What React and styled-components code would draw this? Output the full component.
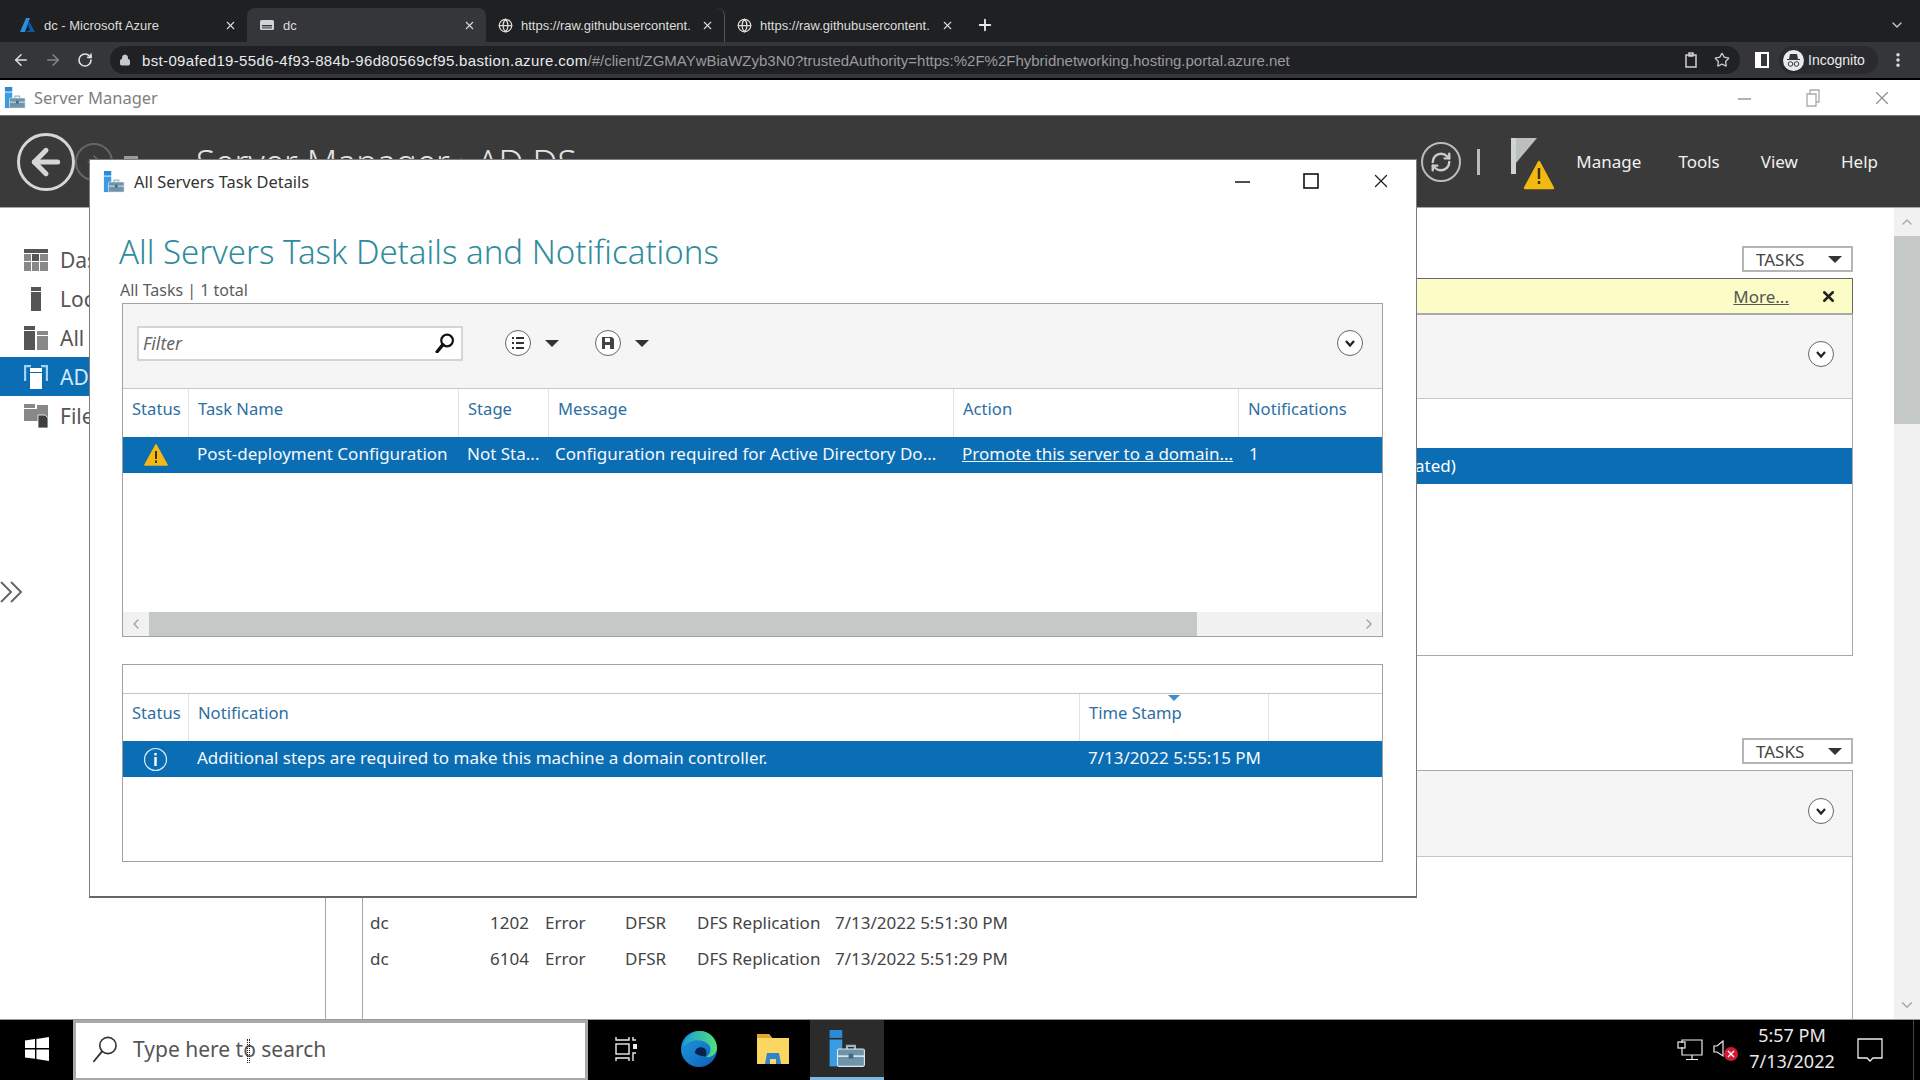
import React from "react"
import styled, { createGlobalStyle } from "styled-components"
import { ArrowLeft, ArrowRight, RotateCw, RefreshCw, Lock, Star, Plus, X, ChevronDown, ChevronUp, ChevronLeft, ChevronRight, Globe, MoreVertical } from "lucide-react"

const GlobalStyle = createGlobalStyle`
  html, body { margin: 0; padding: 0; background: #fff; }
  * { box-sizing: border-box; }
  body { font-family: "Noto Sans", "Open Sans", sans-serif; }
`

const Page = styled.div`
  position: relative;
  width: 1920px;
  height: 1080px;
  display: flex;
  flex-direction: column;
  overflow: hidden;
`

// Chrome
const TabBar = styled.div`
  height: 42px;
  background: #1f2021;
  display: flex;
  align-items: flex-end;
  padding-left: 8px;
  font-family: "Liberation Sans", Arial, sans-serif;
  font-size: 13px;
`
const Tab = styled.div`
  width: 239px;
  height: 34px;
  padding: 0 10px 0 12px;
  display: flex;
  align-items: center;
  gap: 8px;
  color: #dcdcdc;
  border-radius: 8px 8px 0 0;
  background: ${p => (p.$active ? "#35363a" : "transparent")};
  border-right: ${p => (p.$divider ? "1px solid #55565a" : "none")};
`
const TabTitle = styled.span`
  flex: 1;
  white-space: nowrap;
  overflow: hidden;
`
const NewTab = styled.div`
  margin-left: 12px;
  height: 34px;
  display: flex;
  align-items: center;
  color: #e8e8e8;
`
const TabMenu = styled.div`
  margin-left: auto;
  height: 34px;
  padding-right: 15px;
  display: flex;
  align-items: center;
  color: #c8c8c8;
`
const BrowserBar = styled.div`
  height: 38px;
  background: #35363a;
  border-bottom: 2px solid #000;
  display: flex;
  align-items: center;
  padding-left: 5px;
  font-family: "Liberation Sans", Arial, sans-serif;
`
const NavButton = styled.div`
  width: 32px;
  margin-left: ${p => p.$gap || 0}px;
  display: flex;
  justify-content: center;
  color: ${p => (p.$dim ? "#85868a" : "#dfe1e5")};
`
const Omnibox = styled.div`
  margin-left: 9px;
  width: 1630px;
  height: 28px;
  border-radius: 14px;
  background: #202124;
  padding: 0 10px 0 9px;
  display: flex;
  align-items: center;
  gap: 11px;
  color: #c8c8c8;
  font-size: 15px;
  white-space: nowrap;
`
const UrlHost = styled.span`
  color: #e8eaed;
  letter-spacing: 0.35px;
`
const UrlRest = styled.span`
  color: #9a9b9e;
`
const OmniActions = styled.div`
  margin-left: auto;
  display: flex;
  align-items: center;
  gap: 16px;
`
const ProfilePill = styled.div`
  margin-left: 1px;
  height: 28px;
  width: 99px;
  border-radius: 14px;
  background: #2a2b2e;
  display: flex;
  align-items: center;
  gap: 4px;
  padding-left: 4px;
  color: #e8eaed;
  font-size: 14px;
`
const Avatar = styled.div`
  width: 21px;
  height: 21px;
  border-radius: 50%;
  background: #e8eaed;
  display: flex;
  align-items: center;
  justify-content: center;
`

// Server Manager window
const AppTitleBar = styled.div`
  height: 35px;
  background: #fff;
  display: flex;
  align-items: center;
  padding-left: 4px;
  gap: 8px;
  color: #808080;
  font-size: 16.5px;
`
const WindowControls = styled.div`
  margin-left: auto;
  display: flex;
  align-items: center;
  color: ${p => (p.$dark ? "#222" : "#8c8c8c")};
  padding: ${p => (p.$dark ? "0 24px 2px 0" : "0 27px 0 0")};
  gap: ${p => (p.$dark ? "50px" : "48px")};
`
const AppHeader = styled.div`
  height: 93px;
  background: #3a3a3a;
  border-top: 1px solid #777;
  border-bottom: 1px solid #a8a8a8;
  display: flex;
  align-items: center;
  padding: 0 42px 0 17px;
  color: #eee;
`
const BackCircle = styled.div`
  width: 58px;
  height: 58px;
  border-radius: 50%;
  border: 3px solid #d6d6d6;
  color: #d6d6d6;
  display: flex;
  align-items: center;
  justify-content: center;
`
const ForwardCircle = styled.div`
  width: 38px;
  height: 38px;
  border-radius: 50%;
  border: 2px solid #666;
  color: #666;
  display: flex;
  align-items: center;
  justify-content: center;
`
const HistoryDash = styled.div`
  width: 14px;
  height: 3px;
  margin: 0 0 8px 11px;
  background: #9a9a9a;
`
const HeaderTitle = styled.div`
  margin-left: 58px;
  font-size: 35px;
  font-weight: 300;
  color: #e4e4e4;
  white-space: nowrap;
`
const HeaderRight = styled.div`
  margin-left: auto;
  display: flex;
  align-items: center;
`
const RefreshCircle = styled.div`
  width: 40px;
  height: 40px;
  border-radius: 50%;
  border: 2px solid #bbb;
  color: #ccc;
  display: flex;
  align-items: center;
  justify-content: center;
`
const Divider = styled.div`
  width: 3px;
  height: 26px;
  background: #bbb;
  margin: 0 31px 0 16px;
`
const FlagWrap = styled.div`
  width: 46px;
  height: 52px;
  margin: 5px 19px 0 0;
`
const MenuItem = styled.div`
  font-size: 17px;
  color: #f0f0f0;
  margin-left: ${p => p.$gap || 0}px;
`
const Body = styled.div`
  flex: 1;
  display: flex;
  min-height: 0;
`
const Sidebar = styled.div`
  width: 326px;
  padding-top: 32px;
  border-right: 1px solid #a6a6a6;
  display: flex;
  flex-direction: column;
  flex-shrink: 0;
`
const NavItem = styled.div`
  height: 39px;
  padding-left: 24px;
  display: flex;
  align-items: center;
  gap: 12px;
  font-size: 21px;
  white-space: nowrap;
  color: ${p => (p.$active ? "#cfe8fb" : "#555")};
  background: ${p => (p.$active ? "#0b6db3" : "transparent")};
`
const Collapse = styled.div`
  margin-top: 144px;
  color: #666;
  display: flex;
  align-items: center;
`
const ThumbColumn = styled.div`
  width: 37px;
  flex-shrink: 0;
  border-right: 1px solid #a6a6a6;
`
const Content = styled.div`
  flex: 1;
  min-width: 0;
  padding: 38px 41px 0 0;
  overflow: hidden;
  display: flex;
  flex-direction: column;
`
const TasksRow = styled.div`
  display: flex;
  justify-content: flex-end;
  flex-shrink: 0;
`
const TasksButton = styled.div`
  width: 111px;
  height: 26px;
  border: 2px solid #b5b5b5;
  background: #fff;
  display: flex;
  align-items: center;
  justify-content: space-between;
  padding: 0 9px 0 12px;
  font-size: 17px;
  color: #444;
`
const Caret = styled.span`
  width: 0;
  height: 0;
  border-left: ${p => p.$size || 7}px solid transparent;
  border-right: ${p => p.$size || 7}px solid transparent;
  border-top: ${p => p.$size || 7}px solid #333;
`
const Banner = styled.div`
  margin-top: 6px;
  height: 36px;
  flex-shrink: 0;
  background: #fbfcc6;
  border: 1px solid #666;
  border-bottom-color: #aaa;
  display: flex;
  align-items: center;
  justify-content: flex-end;
  padding-right: 15px;
  color: #555;
  font-size: 17px;
`
const BannerLink = styled.span`
  text-decoration: underline;
  margin-right: 31px;
`
const FilterBand = styled.div`
  height: ${p => p.$height}px;
  flex-shrink: 0;
  background: ${p => p.$plain ? "#fff" : "#f4f5f4"};
  border: ${p => (p.$edged ? "1px solid #a8a8a8" : "none")};
  border-bottom: 1px solid #c6c6c6;
  display: flex;
  align-items: center;
  padding: ${p => p.$padding || "0"};
`
const PushRight = styled.div`
  margin-left: auto;
`
const RoundIcon = styled.div`
  width: ${p => p.$size || 26}px;
  height: ${p => p.$size || 26}px;
  border-radius: 50%;
  border: 1px solid #666;
  background: #fff;
  color: #222;
  display: flex;
  align-items: center;
  justify-content: center;
`
const ListFrame = styled.div`
  height: ${p => p.$height}px;
  border-right: 1px solid #a8a8a8;
  border-left: ${p => (p.$flush ? "none" : "1px solid #a8a8a8")};
  border-bottom: ${p => (p.$flush ? "none" : "1px solid #a8a8a8")};
  padding-top: 49px;
  background: #fff;
  flex-shrink: 0;
`
const ActivationRow = styled.div`
  height: 36px;
  background: #0b6db3;
  color: #fff;
  font-size: 17px;
  display: flex;
  align-items: center;
  padding: 0 0 2px 1051px;
`
const SecondTasks = styled(TasksRow)`
  margin-top: 82px;
`
const PanelGap = styled.div`
  height: 6px;
  flex-shrink: 0;
`
const EventRow = styled.div`
  height: 36px;
  display: grid;
  grid-template-columns: 120px 55px 80px 72px 138px auto;
  padding: 0 0 3px 7px;
  align-items: center;
  font-size: 17px;
  color: #444;
`
const Scrollbar = styled.div`
  width: 26px;
  flex-shrink: 0;
  background: #f1f1f1;
  display: flex;
  flex-direction: column;
  color: #a8a8a8;
`
const ScrollArrow = styled.div`
  height: 28px;
  display: flex;
  align-items: center;
  justify-content: center;
`
const ScrollThumb = styled.div`
  height: 188px;
  background: #c4c8c6;
`
const ScrollGap = styled.div`
  flex: 1;
`

// Dialog
const Dialog = styled.div`
  position: absolute;
  left: 89px;
  top: 159px;
  width: 1328px;
  height: 739px;
  background: #fff;
  border: 1px solid #7d7d7d;
  border-bottom: 2px solid #666;
  display: flex;
  flex-direction: column;
  padding: 0 33px 0 32px;
`
const DialogTitleBar = styled.div`
  height: 43px;
  margin: 0 -33px 0 -32px;
  padding-left: 13px;
  display: flex;
  align-items: center;
  gap: 9px;
  font-size: 16.4px;
  color: #333;
  flex-shrink: 0;
`
const Heading = styled.h1`
  margin: 27px 0 0 -3px;
  height: 44px;
  line-height: 44px;
  font-size: 33px;
  font-weight: 300;
  color: #2f8c9c;
  white-space: nowrap;
`
const SubHeading = styled.div`
  margin: 5px 0 2px -2px;
  height: 22px;
  line-height: 22px;
  font-size: 16px;
  color: #5c5c5c;
`
const GridPanel = styled.div`
  height: ${p => p.$height}px;
  margin-top: ${p => p.$top || 0}px;
  flex-shrink: 0;
  border: 1px solid #a0a0a0;
  display: flex;
  flex-direction: column;
  background: #fff;
`
const FilterInput = styled.div`
  width: 326px;
  height: 35px;
  border: 2px solid #d4d4d4;
  background: #fff;
  display: flex;
  align-items: center;
  justify-content: space-between;
  padding: 0 6px 0 4px;
  font-style: italic;
  font-size: 17.5px;
  color: #666;
`
const ToolGroup = styled.div`
  display: flex;
  align-items: center;
  gap: 14px;
  margin-left: ${p => p.$gap}px;
`
const TableHeader = styled.div`
  position: relative;
  height: ${p => p.$height || 48}px;
  flex-shrink: 0;
  display: grid;
  grid-template-columns: ${p => p.$columns};
  align-items: center;
  font-size: 16.6px;
  color: #2d6ea3;
`
const HeaderCell = styled.div`
  height: 100%;
  padding: 0 0 10px 9px;
  display: flex;
  align-items: center;
  white-space: nowrap;
  border-left: ${p => (p.$first ? "none" : "1px solid #e3e3e3")};
`
const SortMark = styled.span`
  position: absolute;
  top: 1px;
  left: 1045px;
  width: 0;
  height: 0;
  border-left: 6px solid transparent;
  border-right: 6px solid transparent;
  border-top: 6px solid #3f8fd0;
`
const SelectedRow = styled.div`
  height: 36px;
  flex-shrink: 0;
  display: grid;
  grid-template-columns: ${p => p.$columns};
  align-items: center;
  background: #0b6db3;
  color: #f4f9fc;
  font-size: 17px;
`
const StatusCell = styled.div`
  display: flex;
  justify-content: center;
`
const TextCell = styled.div`
  padding: 0 0 3px ${p => p.$pad ?? 9}px;
  white-space: nowrap;
`
const RowLink = styled.span`
  text-decoration: underline;
`
const Spacer = styled.div`
  flex: 1;
`
const HScrollbar = styled.div`
  height: 24px;
  flex-shrink: 0;
  background: #f1f1f1;
  display: flex;
  color: #a0a0a0;
`
const HScrollArrow = styled.div`
  width: ${p => p.$width}px;
  display: flex;
  align-items: center;
  justify-content: center;
`
const HScrollThumb = styled.div`
  width: 1048px;
  background: #c4c8c6;
`

// Taskbar
const Taskbar = styled.div`
  height: 61px;
  background: #000;
  border-top: 1px solid #999;
  display: flex;
  align-items: stretch;
`
const StartButton = styled.div`
  width: 73px;
  padding-bottom: 2px;
  display: flex;
  align-items: center;
  justify-content: center;
`
const SearchBox = styled.div`
  position: relative;
  width: 515px;
  background: #fff;
  border: 3px solid #a9a9a9;
  border-bottom-width: 2px;
  display: flex;
  align-items: center;
  gap: 14px;
  padding: 0 0 3px 15px;
  font-size: 21px;
  color: #555;
`
const IBeam = styled.span`
  position: absolute;
  left: 171px;
  top: 16px;
  width: 3px;
  height: 24px;
  border-left: 1px dotted #222;
  border-right: 1px dotted #222;
`
const TaskButton = styled.div`
  width: 74px;
  padding-bottom: ${p => (p.$open ? "0" : "3px")};
  display: flex;
  align-items: center;
  justify-content: center;
  background: ${p => (p.$open ? "#2b2b2b" : "transparent")};
  border-bottom: ${p => (p.$open ? "3px solid #7cb8e6" : "none")};
`
const Tray = styled.div`
  margin-left: auto;
  display: flex;
  align-items: center;
  color: #eee;
`
const TraySlot = styled.div`
  margin-left: ${p => p.$gap || 0}px;
  display: flex;
  align-items: center;
`
const Clock = styled.div`
  width: 90px;
  margin-left: 6px;
  padding-bottom: 4px;
  font-size: 18px;
  line-height: 26px;
  text-align: center;
  color: #e8e8e8;
  white-space: nowrap;
`
const ShowDesktop = styled.div`
  width: 7px;
  height: 100%;
  margin-left: 30px;
  border-left: 1px solid #444;
`

const ToolkitIcon = ({ size = 24 }) => (
  <svg width={size} height={size} viewBox="0 0 24 24">
    <rect x="1" y="0" width="8" height="5" fill="#2b8ad6" />
    <rect x="1" y="6" width="8" height="17" fill="#3b9ce6" />
    <path d="M12 12v-2h5v2" fill="none" stroke="#9db4c2" strokeWidth="1.4" />
    <rect x="6" y="12" width="17" height="11" rx="1" fill="#6f93a8" stroke="#dfeaf0" strokeWidth="0.7" />
    <rect x="6" y="16" width="17" height="1" fill="#dfeaf0" />
    <rect x="13" y="15" width="3" height="3" fill="#3d6a85" />
  </svg>
)

const WarningIcon = ({ size = 24 }) => (
  <svg width={size} height={size} viewBox="0 0 24 24">
    <path d="M12 2 L23 22 H1 Z" fill="#f5b916" stroke="#f5b916" strokeWidth="1.6" strokeLinejoin="round" />
    <rect x="11" y="8" width="2" height="8" fill="#3a3016" />
    <rect x="11" y="17.5" width="2" height="2.4" fill="#3a3016" />
  </svg>
)

const InfoIcon = () => (
  <svg width="25" height="25" viewBox="0 0 25 25">
    <circle cx="12.5" cy="12.5" r="11" fill="none" stroke="#d7ecfa" strokeWidth="1.2" />
    <rect x="11.3" y="10" width="2.4" height="9" fill="#fff" />
    <rect x="11.3" y="6" width="2.4" height="2.4" fill="#fff" />
  </svg>
)

const Chevron = () => (
  <svg width="12" height="12" viewBox="0 0 12 12">
    <path d="M2 4 L6 8.5 L10 4" fill="none" stroke="#222" strokeWidth="2.2" />
  </svg>
)

// magnifier with the handle on the lower left, as Windows draws it
const Magnifier = ({ size, ring, handle, color }) => (
  <svg width={size} height={size} viewBox="0 0 24 24">
    <circle cx="14.5" cy="9" r="7" fill="none" stroke={color} strokeWidth={ring} />
    <path d="M9.5 14 L2.5 22.5" stroke={color} strokeWidth={handle} strokeLinecap="round" />
  </svg>
)

const NavGlyph = ({ kind, light }) => {
  const dark = light ? "#bfe3fb" : "#555"
  const mid = light ? "#fff" : "#888"
  if (kind === "dash") {
    return (
      <svg width="24" height="24" viewBox="0 0 24 24">
        <rect y="1" width="24" height="4" fill={dark} />
        <rect y="6" width="7" height="7" fill={mid} />
        <rect x="8" y="6" width="7" height="7" fill={dark} />
        <rect x="16" y="6" width="8" height="7" fill={mid} />
        <rect y="14" width="7" height="9" fill={mid} />
        <rect x="8" y="14" width="7" height="9" fill={mid} />
        <rect x="16" y="14" width="8" height="9" fill={mid} />
      </svg>
    )
  }
  if (kind === "local") {
    return (
      <svg width="24" height="24" viewBox="0 0 24 24">
        <rect x="7" y="0" width="10" height="4" fill={dark} />
        <rect x="7" y="5" width="10" height="19" fill={dark} />
      </svg>
    )
  }
  if (kind === "all") {
    return (
      <svg width="24" height="24" viewBox="0 0 24 24">
        <rect y="0" width="11" height="4" fill={dark} />
        <rect y="5" width="11" height="19" fill={dark} />
        <rect x="13" y="5" width="11" height="4" fill={mid} />
        <rect x="13" y="10" width="11" height="14" fill={mid} />
      </svg>
    )
  }
  if (kind === "ad") {
    return (
      <svg width="24" height="24" viewBox="0 0 24 24">
        <path d="M1 16V1h6M23 16V1h-6" fill="none" stroke="#9fd4f7" strokeWidth="2.4" />
        <rect x="6" y="3" width="12" height="4" fill="#fff" />
        <rect x="6" y="8" width="12" height="16" fill="#fff" />
      </svg>
    )
  }
  return (
    <svg width="24" height="24" viewBox="0 0 24 24">
      <rect y="0" width="11" height="4" fill={mid} />
      <rect y="5" width="24" height="12" fill={mid} />
      <rect y="1" x="13" width="11" height="4" fill={mid} />
      <path d="M14 11h7l3 3v10H14z" fill="#3f3f3f" stroke="#fff" strokeWidth="0.8" />
    </svg>
  )
}

const EdgeLogo = () => (
  <svg width="38" height="38" viewBox="0 0 38 38">
    <defs>
      <linearGradient id="edgeBase" x1="0" y1="0" x2="1" y2="1">
        <stop offset="0" stopColor="#1f9be0" />
        <stop offset="1" stopColor="#0f5fb5" />
      </linearGradient>
      <linearGradient id="edgeWave" x1="0" y1="0.5" x2="1" y2="0.5">
        <stop offset="0" stopColor="#1d9fd8" />
        <stop offset="1" stopColor="#4fe07a" />
      </linearGradient>
    </defs>
    <circle cx="19" cy="19" r="18" fill="url(#edgeBase)" />
    <path d="M20 1C30 1 37 9 37 18C37 24 31 28 26 27C31 24 32 18 28 14C22 8 10 9 3 17C5 8 12 1 20 1Z" fill="url(#edgeWave)" />
    <path d="M15 23C15 18 20 16 24 18C27 20 27 24 25.5 26.5C20 26 17 25 15 23Z" fill="#04224a" />
  </svg>
)

const FolderLogo = () => (
  <svg width="34" height="32" viewBox="0 0 34 32">
    <path d="M1 1h12l3 4h17v26H1z" fill="#fbd661" />
    <path d="M1 1h12l3 4H1z" fill="#dca92f" />
    <path d="M9 31l2-11h12l2 11h-5v-5h-6v5z" fill="#2f85cc" />
  </svg>
)

const taskColumns = "65px 270px 90px 405px 285px 144px"
const noteColumns = "65px 891px 189px 114px"

export default function App() {
  return (
    <>
      <GlobalStyle />
      <Page>
        <TabBar>
          <Tab>
            <svg width="16" height="16" viewBox="0 0 16 16">
              <path d="M6 1h4L5 15H0z" fill="#2a8ee0" />
              <path d="M9 4l6 11H6l4-2-2-5z" fill="#0b5ba8" />
            </svg>
            <TabTitle>dc - Microsoft Azure</TabTitle>
            <X size={13} />
          </Tab>
          <Tab $active>
            <svg width="16" height="16" viewBox="0 0 16 16">
              <rect x="1" y="3" width="14" height="10" rx="1.5" fill="#cfd2d6" />
              <rect x="3" y="8" width="10" height="1.4" fill="#35363a" />
              <rect x="3" y="10.4" width="10" height="1" fill="#35363a" />
            </svg>
            <TabTitle>dc</TabTitle>
            <X size={13} />
          </Tab>
          <Tab $divider>
            <Globe size={15} />
            <TabTitle>https://raw.githubusercontent.</TabTitle>
            <X size={13} />
          </Tab>
          <Tab>
            <Globe size={15} />
            <TabTitle>https://raw.githubusercontent.</TabTitle>
            <X size={13} />
          </Tab>
          <NewTab><Plus size={18} strokeWidth={2.5} /></NewTab>
          <TabMenu><ChevronDown size={16} /></TabMenu>
        </TabBar>

        <BrowserBar>
          <NavButton><ArrowLeft size={18} /></NavButton>
          <NavButton $dim><ArrowRight size={18} /></NavButton>
          <NavButton><RotateCw size={16} strokeWidth={2.4} /></NavButton>
          <Omnibox>
            <Lock size={12} fill="#c8c8c8" />
            <span>
              <UrlHost>bst-09afed19-55d6-4f93-884b-96d80569cf95.bastion.azure.com</UrlHost>
              <UrlRest>/#/client/ZGMAYwBiaWZyb3N0?trustedAuthority=https:%2F%2Fhybridnetworking.hosting.portal.azure.net</UrlRest>
            </span>
            <OmniActions>
              <svg width="14" height="16" viewBox="0 0 14 16">
                <path d="M2 3h10v12H2z M5 1h4v3H5z" fill="none" stroke="#d0d0d0" strokeWidth="1.5" />
              </svg>
              <Star size={16} />
            </OmniActions>
          </Omnibox>
          <NavButton $gap={6}>
            <svg width="14" height="16" viewBox="0 0 14 16">
              <rect x="1" y="1" width="12" height="14" fill="none" stroke="#fff" strokeWidth="2" />
              <rect x="1" y="1" width="5" height="14" fill="#fff" />
            </svg>
          </NavButton>
          <ProfilePill>
            <Avatar>
              <svg width="15" height="15" viewBox="0 0 15 15">
                <path d="M4 1h7l1 5h2v1H1V6h2z" fill="#35363a" />
                <circle cx="4.5" cy="11" r="2.3" fill="none" stroke="#35363a" />
                <circle cx="10.5" cy="11" r="2.3" fill="none" stroke="#35363a" />
              </svg>
            </Avatar>
            Incognito
          </ProfilePill>
          <NavButton $gap={4}><MoreVertical size={18} strokeWidth={2.6} /></NavButton>
        </BrowserBar>

        <AppTitleBar>
          <ToolkitIcon size={22} />
          Server Manager
          <WindowControls>
            <svg width="20" height="20" viewBox="0 0 20 20"><path d="M3 11h13" stroke="#999" strokeWidth="1.5" /></svg>
            <svg width="20" height="20" viewBox="0 0 20 20">
              <path d="M4 6h9v12H4zM7 6V2h9v12h-3" fill="none" stroke="#aaa" strokeWidth="1.3" />
            </svg>
            <X size={22} strokeWidth={1.2} />
          </WindowControls>
        </AppTitleBar>

        <AppHeader>
          <BackCircle><ArrowLeft size={40} strokeWidth={3} /></BackCircle>
          <ForwardCircle><ArrowRight size={20} /></ForwardCircle>
          <HistoryDash />
          <HeaderTitle>Server Manager  ›  AD DS</HeaderTitle>
          <HeaderRight>
            <RefreshCircle><RefreshCw size={22} strokeWidth={2.6} /></RefreshCircle>
            <Divider />
            <FlagWrap>
              <svg width="46" height="52" viewBox="0 0 46 52">
                <rect x="0" y="0" width="5" height="36" fill="#d0d4d0" />
                <path d="M5 0h21L5 25z" fill="#bcc0bc" />
                <path d="M28 24 L42 50 H14 Z" fill="#f2b90f" stroke="#f2b90f" strokeWidth="2.4" strokeLinejoin="round" />
                <rect x="26.8" y="30" width="2.4" height="11" fill="#3a3016" />
                <rect x="26.8" y="43" width="2.4" height="3" fill="#3a3016" />
              </svg>
            </FlagWrap>
            <MenuItem>Manage</MenuItem>
            <MenuItem $gap={37}>Tools</MenuItem>
            <MenuItem $gap={41}>View</MenuItem>
            <MenuItem $gap={43}>Help</MenuItem>
          </HeaderRight>
        </AppHeader>

        <Body>
          <Sidebar>
            <NavItem><NavGlyph kind="dash" />Dashboard</NavItem>
            <NavItem><NavGlyph kind="local" />Local Server</NavItem>
            <NavItem><NavGlyph kind="all" />All Servers</NavItem>
            <NavItem $active><NavGlyph kind="ad" light />AD DS</NavItem>
            <NavItem><NavGlyph kind="file" />File and Storage Services</NavItem>
            <Collapse>
              <svg width="26" height="26" viewBox="0 0 26 26">
                <path d="M1 3l10 10L1 23M11 3l10 10-10 10" fill="none" stroke="#666" strokeWidth="2" />
              </svg>
            </Collapse>
          </Sidebar>
          <ThumbColumn />
          <Content>
            <TasksRow>
              <TasksButton>TASKS<Caret /></TasksButton>
            </TasksRow>
            <Banner>
              <BannerLink>More...</BannerLink>
              <X size={17} strokeWidth={3.5} color="#222" />
            </Banner>
            <FilterBand $height={85} $edged $padding="0 18px 5px 0">
              <PushRight><RoundIcon><Chevron /></RoundIcon></PushRight>
            </FilterBand>
            <ListFrame $height={257}>
              <ActivationRow>ated)</ActivationRow>
            </ListFrame>
            <SecondTasks>
              <TasksButton>TASKS<Caret /></TasksButton>
            </SecondTasks>
            <PanelGap />
            <FilterBand $height={87} $edged $padding="0 18px 5px 0">
              <PushRight><RoundIcon><Chevron /></RoundIcon></PushRight>
            </FilterBand>
            <ListFrame $height={300} $flush>
              <EventRow>
                <span>dc</span><span>1202</span><span>Error</span><span>DFSR</span><span>DFS Replication</span><span>7/13/2022 5:51:30 PM</span>
              </EventRow>
              <EventRow>
                <span>dc</span><span>6104</span><span>Error</span><span>DFSR</span><span>DFS Replication</span><span>7/13/2022 5:51:29 PM</span>
              </EventRow>
            </ListFrame>
          </Content>
          <Scrollbar>
            <ScrollArrow><ChevronUp size={16} /></ScrollArrow>
            <ScrollThumb />
            <ScrollGap />
            <ScrollArrow><ChevronDown size={18} /></ScrollArrow>
          </Scrollbar>
        </Body>

        <Taskbar>
          <StartButton>
            <svg width="24" height="24" viewBox="0 0 24 24">
              <path d="M0 3.5l10-1.4V11H0zM11.4 2L24 0v11H11.4zM0 12.4h10v9.4L0 20.4zM11.4 12.4H24V24l-12.6-1.9z" fill="#fff" />
            </svg>
          </StartButton>
          <SearchBox>
            <Magnifier size={28} ring={1.4} handle={1.6} color="#333" />
            Type here to search
            <IBeam />
          </SearchBox>
          <TaskButton>
            <svg width="24" height="26" viewBox="0 0 24 26">
              <path d="M3 1v3h13V1M3 25v-3h13v3M20 1v3h3M20 25v-8h3" stroke="#eee" strokeWidth="1.4" fill="none" />
              <rect x="3" y="8" width="13" height="10" fill="none" stroke="#eee" strokeWidth="1.4" />
              <rect x="20" y="8" width="4" height="5" fill="#eee" />
            </svg>
          </TaskButton>
          <TaskButton><EdgeLogo /></TaskButton>
          <TaskButton><FolderLogo /></TaskButton>
          <TaskButton $open><ToolkitIcon size={38} /></TaskButton>
          <Tray>
            <svg width="26" height="22" viewBox="0 0 26 22">
              <path d="M5 4V1h20v15H5V8M15 16v4M9 20.5h12" fill="none" stroke="#eee" strokeWidth="1.2" />
              <rect x="1" y="3" width="7" height="6" fill="none" stroke="#eee" strokeWidth="1.2" />
            </svg>
            <TraySlot $gap={10}>
              <svg width="28" height="24" viewBox="0 0 28 24">
                <path d="M1 8h3l6-5v15l-6-4H1z" fill="none" stroke="#eee" strokeWidth="1.2" />
                <circle cx="18" cy="16" r="7" fill="#d01b35" />
                <path d="M15 13l6 6M21 13l-6 6" stroke="#fff" strokeWidth="1.4" />
              </svg>
            </TraySlot>
            <Clock>5:57 PM<br />7/13/2022</Clock>
            <TraySlot $gap={20}>
              <svg width="26" height="24" viewBox="0 0 26 24">
                <path d="M1 1h24v19h-9l-3 3-3-3H1z" fill="none" stroke="#eee" strokeWidth="1.3" />
              </svg>
            </TraySlot>
            <ShowDesktop />
          </Tray>
        </Taskbar>

        <Dialog>
          <DialogTitleBar>
            <ToolkitIcon size={22} />
            All Servers Task Details
            <WindowControls $dark>
              <svg width="18" height="18" viewBox="0 0 18 18"><path d="M1 10h15" stroke="#222" strokeWidth="1.6" /></svg>
              <svg width="18" height="18" viewBox="0 0 18 18"><rect x="2" y="2" width="14" height="14" fill="none" stroke="#111" strokeWidth="1.6" /></svg>
              <X size={22} strokeWidth={1.4} />
            </WindowControls>
          </DialogTitleBar>
          <Heading>All Servers Task Details and Notifications</Heading>
          <SubHeading>All Tasks | 1 total</SubHeading>

          <GridPanel $height={334}>
            <FilterBand $height={85} $padding="0 19px 6px 14px">
              <FilterInput>
                Filter
                <Magnifier size={20} ring={2.6} handle={4} color="#111" />
              </FilterInput>
              <ToolGroup $gap={42}>
                <RoundIcon>
                  <svg width="14" height="14" viewBox="0 0 14 14">
                    <path d="M1 2h2M1 7h2M1 12h2M5 2h8M5 7h8M5 12h8" stroke="#333" strokeWidth="2" />
                  </svg>
                </RoundIcon>
                <Caret $size={7} />
              </ToolGroup>
              <ToolGroup $gap={36}>
                <RoundIcon>
                  <svg width="14" height="14" viewBox="0 0 14 14">
                    <path d="M1 1h10l2 2v10H1z" fill="#444" />
                    <rect x="4" y="2" width="5" height="4" fill="#fff" />
                    <rect x="4" y="9" width="5" height="4" fill="#fff" />
                  </svg>
                </RoundIcon>
                <Caret $size={7} />
              </ToolGroup>
              <PushRight><RoundIcon><Chevron /></RoundIcon></PushRight>
            </FilterBand>
            <TableHeader $columns={taskColumns}>
              <HeaderCell $first>Status</HeaderCell>
              <HeaderCell>Task Name</HeaderCell>
              <HeaderCell>Stage</HeaderCell>
              <HeaderCell>Message</HeaderCell>
              <HeaderCell>Action</HeaderCell>
              <HeaderCell>Notifications</HeaderCell>
            </TableHeader>
            <SelectedRow $columns={taskColumns}>
              <StatusCell><WarningIcon /></StatusCell>
              <TextCell>Post-deployment Configuration</TextCell>
              <TextCell>Not Sta...</TextCell>
              <TextCell $pad={7}>Configuration required for Active Directory Do...</TextCell>
              <TextCell><RowLink>Promote this server to a domain...</RowLink></TextCell>
              <TextCell $pad={11}>1</TextCell>
            </SelectedRow>
            <Spacer />
            <HScrollbar>
              <HScrollArrow $width={26}><ChevronLeft size={16} /></HScrollArrow>
              <HScrollThumb />
              <Spacer />
              <HScrollArrow $width={26}><ChevronRight size={16} /></HScrollArrow>
            </HScrollbar>
          </GridPanel>

          <GridPanel $height={198} $top={27}>
            <FilterBand $height={29} $plain />
            <TableHeader $columns={noteColumns} $height={47}>
              <SortMark />
              <HeaderCell $first>Status</HeaderCell>
              <HeaderCell>Notification</HeaderCell>
              <HeaderCell>Time Stamp</HeaderCell>
              <HeaderCell />
            </TableHeader>
            <SelectedRow $columns={noteColumns}>
              <StatusCell><InfoIcon /></StatusCell>
              <TextCell>Additional steps are required to make this machine a domain controller.</TextCell>
              <TextCell>7/13/2022 5:55:15 PM</TextCell>
            </SelectedRow>
          </GridPanel>
        </Dialog>
      </Page>
    </>
  )
}
